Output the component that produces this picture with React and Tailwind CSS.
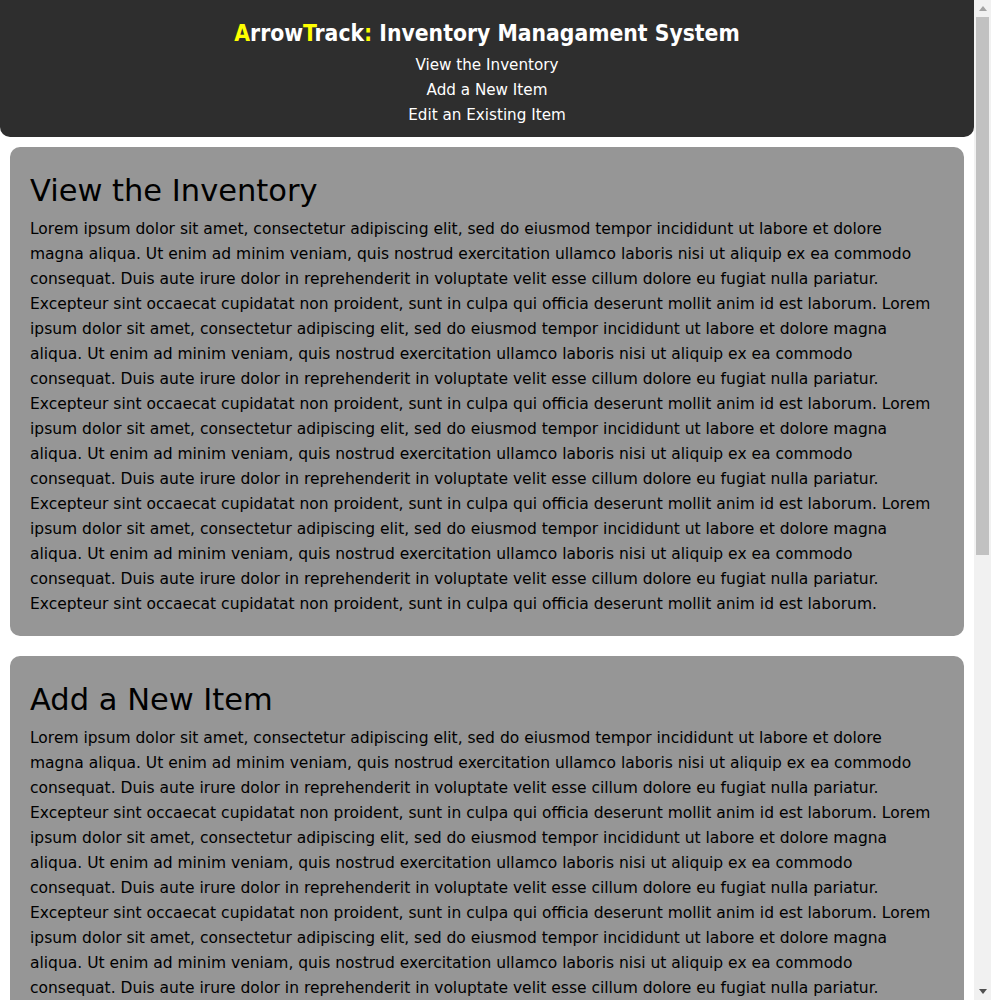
import React from "react";

const lorem =
  "Lorem ipsum dolor sit amet, consectetur adipiscing elit, sed do eiusmod tempor incididunt ut labore et dolore magna aliqua. Ut enim ad minim veniam, quis nostrud exercitation ullamco laboris nisi ut aliquip ex ea commodo consequat. Duis aute irure dolor in reprehenderit in voluptate velit esse cillum dolore eu fugiat nulla pariatur. Excepteur sint occaecat cupidatat non proident, sunt in culpa qui officia deserunt mollit anim id est laborum.";

const text = [lorem, lorem, lorem, lorem].join(" ");

const sections = ["View the Inventory", "Add a New Item", "Edit an Existing Item"];

function App() {
  return (
    <div className="flex h-[1000px] overflow-hidden bg-white font-['DejaVu_Sans',sans-serif]">
      <div className="min-w-0 flex-1">
        {/* Header */}
        <div className="flex flex-col items-center rounded-b-[10px] bg-[#2e2e2e] pt-[17px] pb-[9px] text-white">
          <h1 className="mb-[4px] font-['DejaVu_Sans_Condensed',sans-serif] text-[22.7px] font-bold leading-[32px]">
            <span className="text-[#ffff00]">A</span>rrow
            <span className="text-[#ffff00]">T</span>rack
            <span className="text-[#ffff00]">:</span> Inventory Managament System
          </h1>
          {sections.map((s) => (
            <a key={s} className="text-[15.2px] leading-[25px]">
              {s}
            </a>
          ))}
        </div>

        {/* Sections */}
        <div className="flex flex-col gap-[20px] p-[10px]">
          {sections.map((s) => (
            <div key={s} className="rounded-[10px] bg-[#969696] px-[20px] pt-[25px] pb-[19px] text-black">
              <h2 className="mb-[7px] text-[30.5px] leading-[38px]">{s}</h2>
              <p className="max-w-[905px] text-[15.5px] leading-[25px]">{text}</p>
            </div>
          ))}
        </div>
      </div>

      {/* Scrollbar */}
      <div className="flex w-[17px] flex-col bg-[#f1f1f1]">
        <div className="flex h-[17px] items-center justify-center">
          <svg width="8" height="5" viewBox="0 0 8 5">
            <path d="M0 5 L4 0 L8 5 Z" fill="#a3a3a3" />
          </svg>
        </div>
        <div className="mx-[2px] h-[538px] bg-[#c1c1c1]" />
        <div className="flex-1" />
        <div className="flex h-[17px] items-center justify-center">
          <svg width="8" height="5" viewBox="0 0 8 5">
            <path d="M0 0 L8 0 L4 5 Z" fill="#505050" />
          </svg>
        </div>
      </div>
    </div>
  );
}

export default App;
